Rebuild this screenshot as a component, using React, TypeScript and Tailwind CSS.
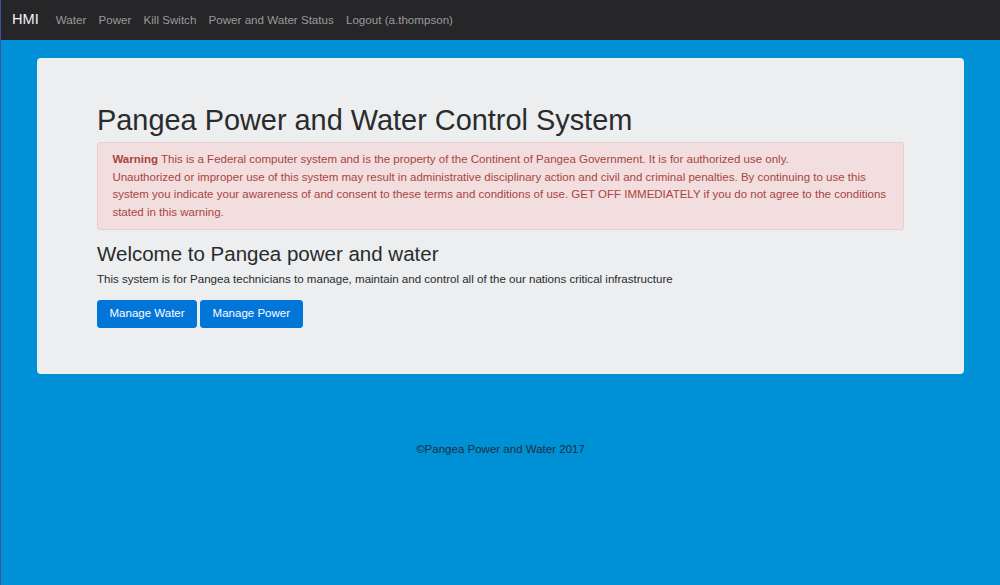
export default function App() {
  const links = ['Water', 'Power', 'Kill Switch', 'Power and Water Status', 'Logout (a.thompson)'];

  return (
    <div
      className="min-h-[585px] bg-[#0090d6] border-l border-[#6a2a80]/60"
      style={{ fontFamily: '"Liberation Sans", Arial, sans-serif' }}
    >
      {/* NAVBAR */}
      <nav className="h-[40px] bg-[#262628] flex items-center pl-[11px]">
        <span className="text-[14.6px] text-[#f2f2f2] mr-[17px]">HMI</span>
        <div className="flex gap-[12.2px]">
          {links.map((l) => (
            <a key={l} href="#" className="text-[11.6px] text-[#9a9a9a]">
              {l}
            </a>
          ))}
        </div>
      </nav>

      {/* JUMBOTRON */}
      <div className="px-[36px] pt-[18px]">
        <div className="bg-[#eceeef] rounded-[4px] px-[60px] pt-[47px] pb-[46px]">
          <h1 className="text-[28.9px] leading-[1.1] text-[#292b2c] mb-[5px]">
            Pangea Power and Water Control System
          </h1>

          <div className="bg-[#f2dede] border border-[#ebcccc] rounded-[3px] px-[14.4px] pt-[8.5px] pb-[8px] text-[11.52px] leading-[17.5px] text-[#a94442]">
            <b>Warning</b> This is a Federal computer system and is the property of the Continent of Pangea
            Government. It is for authorized use only.
            <br />
            Unauthorized or improper use of this system may result in administrative disciplinary action and
            civil and criminal penalties. By continuing to use this system you indicate your awareness of and
            consent to these terms and conditions of use. GET OFF IMMEDIATELY if you do not agree to the
            conditions stated in this warning.
          </div>

          <h3 className="text-[20.5px] leading-[1.1] text-[#292b2c] mt-[13px] mb-[5px]">
            Welcome to Pangea power and water
          </h3>
          <p className="text-[11.56px] leading-[1.5] text-[#292b2c] mb-[12px]">
            This system is for Pangea technicians to manage, maintain and control all of the our nations critical
            infrastructure
          </p>

          <div className="flex gap-[3px]">
            <button className="bg-[#0275d8] text-white text-[11.52px] leading-[1.5] px-[11.5px] py-[4.3px] rounded-[3px] border border-[#0275d8]">
              Manage Water
            </button>
            <button className="bg-[#0275d8] text-white text-[11.52px] leading-[1.5] px-[11.5px] py-[4.3px] rounded-[3px] border border-[#0275d8]">
              Manage Power
            </button>
          </div>
        </div>
      </div>

      {/* FOOTER */}
      <footer className="text-center text-[11.52px] text-[#1f2f3a] mt-[67px]">
        ©Pangea Power and Water 2017
      </footer>
    </div>
  );
}
